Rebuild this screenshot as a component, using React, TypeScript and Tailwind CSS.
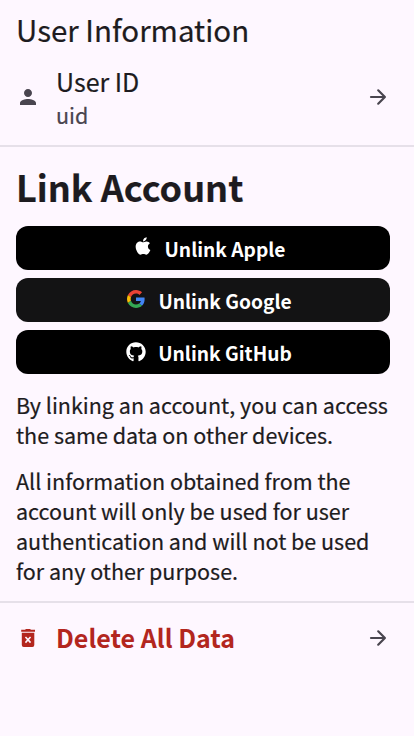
import { FaApple, FaGithub } from "react-icons/fa";
import { MdPerson } from "react-icons/md";
import type { ReactNode } from "react";

function LinkButton({ icon, label, className }: { icon: ReactNode; label: string; className: string }) {
  return (
    <button className={`flex h-11 w-full items-center justify-center rounded-xl pl-3 text-[19.2px] leading-[30px] font-bold text-white ${className}`}>
      {icon}
      <span className="whitespace-nowrap pt-0.5">{label}</span>
    </button>
  );
}

function GoogleIcon() {
  return (
    <svg viewBox="0 0 48 48" className="mr-[13px] ml-px mb-[3px] size-[18px]">
      <path fill="#EA4335" d="M24 9.5c3.54 0 6.71 1.22 9.21 3.6l6.85-6.85C35.9 2.38 30.47 0 24 0 14.62 0 6.51 5.38 2.56 13.22l7.98 6.19C12.43 13.72 17.74 9.5 24 9.5z" />
      <path fill="#4285F4" d="M46.98 24.55c0-1.57-.15-3.09-.38-4.55H24v9.02h12.94c-.58 2.96-2.26 5.48-4.78 7.18l7.73 6c4.51-4.18 7.09-10.36 7.09-17.65z" />
      <path fill="#FBBC05" d="M10.53 28.59c-.48-1.45-.76-2.99-.76-4.59s.27-3.14.76-4.59l-7.98-6.19C.92 16.46 0 20.12 0 24c0 3.88.92 7.54 2.56 10.78l7.97-6.19z" />
      <path fill="#34A853" d="M24 48c6.48 0 11.93-2.13 15.89-5.81l-7.73-6c-2.15 1.45-4.92 2.3-8.16 2.3-6.26 0-11.57-4.22-13.47-9.91l-7.98 6.19C6.51 42.62 14.62 48 24 48z" />
    </svg>
  );
}

function ArrowIcon() {
  return (
    <svg viewBox="0 0 24 24" className="size-6 text-[#49454f]" fill="none" stroke="currentColor" strokeWidth="2.2" strokeLinecap="round" strokeLinejoin="round">
      <path d="M5 12H18.3M12.2 5.3l6.7 6.7-6.7 6.7" />
    </svg>
  );
}

function DeleteIcon() {
  return (
    <svg viewBox="0 0 24 24" className="size-6 text-[#b3261e]" fill="currentColor">
      <path fillRule="evenodd" d="M5.2 3.7H9L10 2.9h4l1 .8h4v2.1H5.2ZM5.8 6.8h12.5v12.3a1.9 1.9 0 0 1-1.9 1.9H7.7a1.9 1.9 0 0 1-1.9-1.9V6.8Zm3.1 4.7 2 2.3-2 2.3 1.1 1.1 2-2.1 2 2.1 1.1-1.1-2-2.3 2-2.3-1.1-1.1-2 2.1-2-2.1-1.1 1.1Z" />
    </svg>
  );
}

export default function App() {
  return (
    <main className="flex min-h-screen w-full flex-col overflow-hidden bg-[#fef7ff] font-['Noto_Sans_CJK_JP',sans-serif] text-[#1d1b20]">
      <h1 className="h-[62px] pt-2 pl-4 text-[29.5px] leading-[42px] whitespace-nowrap [-webkit-text-stroke:0.2px]">User Information</h1>
      <section className="flex h-[83px] items-start pl-4">
        <MdPerson className="mt-[23px] size-6 text-[#49454f]" />
        <div className="ml-4 flex-1 [-webkit-text-stroke:0.2px]">
          <div className="mt-px text-[25px] leading-[36px]">User ID</div>
          <div className="mt-px text-[21.5px] leading-[30px] text-[#49454f]">uid</div>
        </div>
        <div className="mt-[23px] mr-6"><ArrowIcon /></div>
      </section>
      <hr className="h-0.5 border-0 bg-[#e6e0e9]" />
      <section className="pr-6 pl-4">
        <h2 className="h-[79px] pt-3 text-[36px] leading-[54px] font-bold whitespace-nowrap [-webkit-text-stroke:0.2px]">Link Account</h2>
        <div className="flex flex-col gap-2">
          <LinkButton className="bg-black" label="Unlink Apple" icon={<FaApple className="mr-3 mb-1 size-5" />} />
          <LinkButton className="bg-[#131314]" label="Unlink Google" icon={<GoogleIcon />} />
          <LinkButton className="bg-black" label="Unlink GitHub" icon={<FaGithub className="mr-3 size-5" />} />
        </div>
      </section>
      <div className="flex h-[227px] flex-col gap-4 pt-4 pl-4 text-[21.5px] leading-[30px] whitespace-nowrap [-webkit-text-stroke:0.2px]">
        <p>By linking an account, you can access<br />the same data on other devices.</p>
        <p>All information obtained from the<br />account will only be used for user<br />authentication and will not be used<br />for any other purpose.</p>
      </div>
      <hr className="h-0.5 border-0 bg-[#e6e0e9]" />
      <section className="flex h-[70px] items-center pr-6 pl-4">
        <DeleteIcon />
        <span className="ml-4 flex-1 pb-0.5 text-[25px] leading-[36px] font-bold text-[#b3261e]">Delete All Data</span>
        <ArrowIcon />
      </section>
    </main>
  );
}
